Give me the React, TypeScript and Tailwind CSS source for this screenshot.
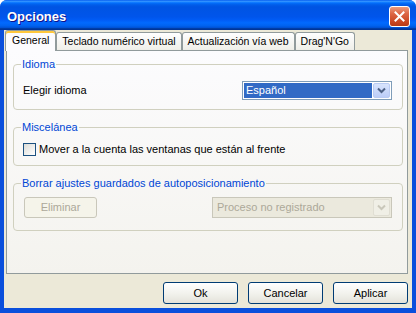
import { ReactNode } from "react";

function Chevron({ color }: { color: string }) {
  return (
    <svg width="9" height="7" viewBox="0 0 9 7">
      <polyline points="1,1.5 4.5,5 8,1.5" fill="none" stroke={color} strokeWidth="2" />
    </svg>
  );
}

function TitleBar() {
  return (
    <div className="h-[30px] flex items-center justify-between pl-[7px] pr-[6px] bg-[linear-gradient(to_bottom,#0058ee_0%,#3593ff_4%,#288eff_6%,#127dff_8%,#036ffc_10%,#0262ee_14%,#0057e5_20%,#0054e3_24%,#0055eb_56%,#005bf5_66%,#026afe_76%,#0062ef_86%,#0052d6_92%,#0040ab_94%,#003092_100%)]">
      <span className="pt-[3px] text-white font-bold text-[13px] leading-none [text-shadow:1px_1px_#0f1089]">
        Opciones
      </span>
      <div className="mt-[2px] w-[21px] h-[21px] rounded-[3px] border border-white bg-[linear-gradient(to_bottom,#eb9a7c,#dd6645_35%,#c8441f_80%,#b63a16)] flex items-center justify-center">
        <svg width="11" height="11" viewBox="0 0 11 11">
          <path d="M1.5 1.5 L9.5 9.5 M9.5 1.5 L1.5 9.5" stroke="white" strokeWidth="2" strokeLinecap="square" />
        </svg>
      </div>
    </div>
  );
}

function Tab({ label, active }: { label: string; active?: boolean }) {
  if (active) {
    return (
      <div className="relative z-10 h-[21px] -mb-px px-[6px] pb-[1px] flex items-center bg-[#fcfcfe] border border-b-0 border-[#919b9c] rounded-t-[3px] shadow-[inset_0_2px_#ffc83c] text-[10.5px]">
        {label}
      </div>
    );
  }
  return (
    <div className="h-[18px] px-[5px] flex items-center border border-b-0 border-[#919b9c] rounded-t-[3px] bg-[linear-gradient(to_bottom,#ffffff,#fafaf9_26%,#f0f0ea_95%,#ecebe5)] text-[10.5px]">
      {label}
    </div>
  );
}

function Group({ title, children, className }: { title: string; children: ReactNode; className: string }) {
  return (
    <fieldset className={`border border-[#d0d0bf] rounded-[4px] px-[8px] ${className}`}>
      <legend className="text-[#0046d5] px-[1px] ml-[-1px] leading-[13px]">{title}</legend>
      {children}
    </fieldset>
  );
}

function Button({ label, disabled }: { label: string; disabled?: boolean }) {
  return (
    <div
      className={
        disabled
          ? "w-[73px] h-[21px] flex items-center justify-center rounded-[3px] border border-[#c9c7ba] bg-[#f5f4ea] text-[#aca899]"
          : "w-[75px] h-[22px] flex items-center justify-center rounded-[3px] border border-[#003c74] bg-[linear-gradient(to_bottom,#ffffff,#f0f0ea_60%,#e3e2da)] text-black"
      }
    >
      {label}
    </div>
  );
}

export default function App() {
  return (
    <div className="w-[416px] h-[313px] flex flex-col bg-[#0a4fdc] rounded-t-[7px] overflow-hidden font-['Liberation_Sans',Tahoma,sans-serif] text-[11px] text-black">
      <TitleBar />
      <div className="flex-1 mx-[4px] mb-[5px] bg-[#ece9d8] flex flex-col">
        <div className="h-[20px] flex items-end pl-[1px]">
          <Tab label="General" active />
          <Tab label="Teclado numérico virtual" />
          <Tab label="Actualización vía web" />
          <Tab label="Drag'N'Go" />
        </div>
        <div className="h-[224px] ml-[2px] mr-[4px] border border-[#919b9c] bg-[linear-gradient(to_bottom,#fcfcfe,#f4f3ee)] flex flex-col pt-[7px] pl-[6px] pr-[4px] gap-[11px]">
          <Group title="Idioma" className="pt-[10px] pb-[9px]">
            <div className="h-[19px] flex items-center justify-between pl-[1px] pr-[2px]">
              <span>Elegir idioma</span>
              <div className="w-[150px] h-[19px] border border-[#7f9db9] bg-white flex items-center p-[1px] gap-[1px]">
                <div className="flex-1 h-full bg-[#316ac5] text-white flex items-center pl-[2px]">Español</div>
                <div className="w-[17px] h-full rounded-[2px] border border-[#b9cbf3] bg-[linear-gradient(to_bottom,#d8e4fd,#bccdf8)] flex items-center justify-center">
                  <Chevron color="#4d6185" />
                </div>
              </div>
            </div>
          </Group>
          <Group title="Miscelánea" className="pt-[9px] pb-[9px]">
            <div className="h-[13px] flex items-center gap-[3px] pl-[1px]">
              <div className="w-[13px] h-[13px] border border-[#1c5180] bg-[linear-gradient(135deg,#dcdcd7,#ffffff)]" />
              <span>Mover a la cuenta las ventanas que están al frente</span>
            </div>
          </Group>
          <Group title="Borrar ajustes guardados de autoposicionamiento" className="pt-[7px] pb-[12px]">
            <div className="h-[21px] flex items-center justify-between pl-[2px] pr-[2px]">
              <Button label="Eliminar" disabled />
              <div className="w-[180px] h-[21px] border border-[#c9c7ba] bg-[#ebe9dd] flex items-center p-[1px] gap-[1px] text-[#aca899]">
                <div className="flex-1 h-full flex items-center pl-[3px]">Proceso no registrado</div>
                <div className="w-[17px] h-full rounded-[2px] border border-[#e0ded3] bg-[#f0efe6] flex items-center justify-center">
                  <Chevron color="#c9c7ba" />
                </div>
              </div>
            </div>
          </Group>
        </div>
        <div className="flex justify-end gap-[10px] pr-[4px] pt-[8px]">
          <Button label="Ok" />
          <Button label="Cancelar" />
          <Button label="Aplicar" />
        </div>
      </div>
    </div>
  );
}
